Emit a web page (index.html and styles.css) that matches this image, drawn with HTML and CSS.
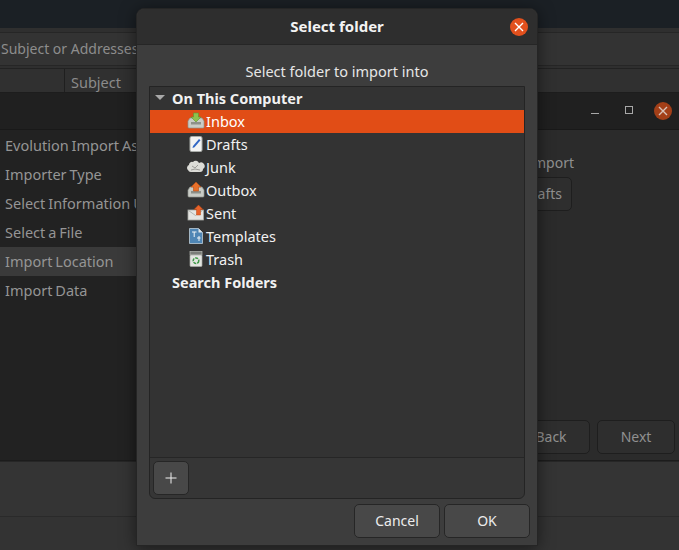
FILE: index.html
```html
<!DOCTYPE html>
<html lang="en">
<head>
<meta charset="utf-8">
<title>Select folder</title>
<link rel="stylesheet" href="styles.css">
</head>
<body>
<div class="desktop">
  <div class="main-window">
    <div class="search-row"><span class="search-entry">Subject or Addresses contain</span></div>
    <div class="columns"><span class="col col-flags"></span><span class="col col-subject">Subject</span></div>
    <div class="main-rest"></div>
    <div class="main-status"></div>
    <div class="main-foot"></div>
  </div>

  <div class="import-window">
    <div class="import-head">
      <span class="wm wm-min"></span>
      <span class="wm wm-max"></span>
      <span class="wm-close dim"><svg width="14" height="14" viewBox="0 0 14 14"><path d="M3 3l8 8M11 3l-8 8" stroke="#d9c4bb" stroke-width="1.4" fill="none"/></svg></span>
    </div>
    <div class="import-body">
      <div class="assistant-side">
        <div class="step">Evolution Import Assistant</div>
        <div class="step">Importer Type</div>
        <div class="step">Select Information Using</div>
        <div class="step">Select a File</div>
        <div class="step step-on">Import Location</div>
        <div class="step">Import Data</div>
      </div>
      <div class="assistant-page">
        <div class="import-label">Location to import</div>
        <div class="fake-btn">Drafts</div>
        <div class="assistant-actions">
          <span class="fake-btn action">Back</span>
          <span class="fake-btn action">Next</span>
        </div>
      </div>
    </div>
  </div>

  <div class="dialog">
    <div class="dialog-head">
      <span class="dialog-title">Select folder</span>
      <span class="wm-close"><svg width="14" height="14" viewBox="0 0 14 14"><path d="M3 3l8 8M11 3l-8 8" stroke="#fff" stroke-width="1.4" fill="none"/></svg></span>
    </div>
    <div class="dialog-body">
      <div class="prompt">Select folder to import into</div>
      <div class="frame">
        <div class="tree">
          <div class="row group"><span class="arrow"></span><span>On This Computer</span></div>
          <div class="row item selected">
            <svg class="ico" viewBox="0 0 18 18"><path d="M1 9l2-3h12l2 3v6a1 1 0 0 1-1 1H2a1 1 0 0 1-1-1z" fill="#c9ccc6" stroke="#8f938c" stroke-width=".7"/><path d="M4 10h10v2.500H4z" fill="#8d918a"/><path d="M6.500 1h5v4h2.500L9 10 4 5h2.500z" fill="#8ec24d" stroke="#5f9430" stroke-width=".6"/></svg>
            <span>Inbox</span>
          </div>
          <div class="row item">
            <svg class="ico" viewBox="0 0 18 18"><rect x="3" y="1.500" width="12" height="15" rx="1.500" fill="#f2f3f2" stroke="#a9aca8"/><path d="M6 11l6-7 1.500 1.300-6 7L5.500 13z" fill="#2f66c4"/></svg>
            <span>Drafts</span>
          </div>
          <div class="row item">
            <svg class="ico" viewBox="0 0 18 18"><path d="M1 12a3 3 0 0 1 1-5 3 3 0 0 1 4-3 3.500 3.500 0 0 1 6 1 3 3 0 0 1 4 6 3 3 0 0 1-3 3H4a3 3 0 0 1-3-2z" fill="#dcdcd7"/><path d="M5 8l3 2 3-3M4 12l4-1 5 1" stroke="#8c8c88" stroke-width=".8" fill="none"/></svg>
            <span>Junk</span>
          </div>
          <div class="row item">
            <svg class="ico" viewBox="0 0 18 18"><path d="M1 9l2-3h12l2 3v6a1 1 0 0 1-1 1H2a1 1 0 0 1-1-1z" fill="#c9ccc6" stroke="#8f938c" stroke-width=".7"/><path d="M4 10h10v2.500H4z" fill="#8d918a"/><path d="M9 1l5 5h-2.500v4h-5V6H4z" fill="#e8702a" stroke="#b84f14" stroke-width=".6"/></svg>
            <span>Outbox</span>
          </div>
          <div class="row item">
            <svg class="ico" viewBox="0 0 18 18"><rect x="1" y="6" width="15.500" height="10" fill="#e4e5e2" stroke="#a5a8a3" stroke-width=".8"/><path d="M1.500 6.500l7 5 7-5" stroke="#a5a8a3" fill="none" stroke-width=".8"/><path d="M11.500 1L16 5.500h-2.500V11h-4V5.500H7z" fill="#e8622a" stroke="#bf4a14" stroke-width=".5"/></svg>
            <span>Sent</span>
          </div>
          <div class="row item">
            <svg class="ico" viewBox="0 0 18 18"><path d="M2.500 1.500h9l4 4v11h-13z" fill="#4f86b5" stroke="#cfdce6" stroke-width=".7"/><path d="M11.500 1.500l4 4h-4z" fill="#dfe6ea"/><path d="M5 5h4.500M7.200 5v5M10 11h3.500M12 9v5" stroke="#eef3f6" stroke-width="1" fill="none"/></svg>
            <span>Templates</span>
          </div>
          <div class="row item">
            <svg class="ico" viewBox="0 0 18 18"><rect x="3" y="1.500" width="12" height="3.500" fill="#7b7e79" stroke="#b5b8b3" stroke-width=".7"/><rect x="3" y="5" width="12" height="11.500" rx="1" fill="#e3e5e1" stroke="#a7aaa5" stroke-width=".7"/><circle cx="9" cy="10.700" r="2.800" fill="none" stroke="#3f9a47" stroke-width="1.500" stroke-dasharray="3 1"/></svg>
            <span>Trash</span>
          </div>
          <div class="row group"><span class="arrow-space"></span><span>Search Folders</span></div>
        </div>
        <div class="frame-toolbar">
          <span class="btn add-btn"><svg width="12" height="12" viewBox="0 0 12 12"><path d="M6 .5v11M.5 6h11" stroke="#f0f0f0" stroke-width="1" fill="none"/></svg></span>
        </div>
      </div>
      <div class="dialog-actions">
        <span class="btn action-btn">Cancel</span>
        <span class="btn action-btn">OK</span>
      </div>
    </div>
  </div>
</div>
</body>
</html>
```
FILE: styles.css
```css
* { box-sizing: border-box; }
html, body { margin: 0; padding: 0; }
body { background: #1b2025; font-family: "Noto Sans", sans-serif; font-size: 14px; }
.desktop { position: relative; width: 679px; height: 550px; overflow: hidden; background: #1b2025; }

.main-window { position: absolute; left: 0; top: 28px; width: 679px; height: 522px; background: #333; display: flex; flex-direction: column; }
.search-row { height: 41px; padding: 4px 0 3px; background: #2f2f2f; border-bottom: 1px solid #222; flex: none; }
.search-entry { display: block; height: 34px; line-height: 32px; background: #333; border-top: 1px solid #262626; border-bottom: 1px solid #262626; color: #8d8d8d; padding-left: 1px; white-space: nowrap; overflow: hidden; }
.columns { height: 24px; display: flex; background: #303030; border-bottom: 1px solid #1d1d1d; flex: none; }
.col { height: 100%; line-height: 26px; color: #8b8b8b; font-size: 14.5px; white-space: nowrap; }
.col-flags { width: 65px; border-right: 1px solid #1f1f1f; }
.col-subject { padding-left: 6px; }
.main-rest { height: 368px; flex: none; }
.main-status { height: 56px; flex: none; background: #343434; border-top: 1px solid #262626; border-bottom: 1px solid #2a2a2a; }
.main-foot { flex: 1; background: #333; }

.import-window { position: absolute; left: 0; top: 93px; width: 679px; height: 368px; background: #2b2b2b; display: flex; flex-direction: column; border-bottom: 1px solid #1c1c1c; }
.import-head { height: 37px; flex: none; background: #202020; border-bottom: 1px solid #191919; display: flex; align-items: center; justify-content: flex-end; padding-right: 7px; }
.wm { display: block; flex: none; }
.wm-min { width: 8px; height: 1px; background: #a8a8a8; margin: 4px 26px 0 0; }
.wm-max { width: 8px; height: 8px; border: 1px solid #a8a8a8; margin: -3px 21px 0 0; }
.wm-close { width: 18px; height: 18px; border-radius: 50%; background: #e2501d; display: flex; align-items: center; justify-content: center; flex: none; }
.wm-close.dim { background: #a33f18; }
.import-body { flex: 1; display: flex; min-height: 0; }
.assistant-side { width: 137px; flex: none; background: #222; padding-top: 1px; }
.step { height: 29px; line-height: 29px; padding-left: 5px; color: #959595; font-size: 14.5px; word-spacing: -0.8px; white-space: nowrap; }
.step-on { background: #3a3a3a; }
.assistant-page { flex: 1; position: relative; color: #909090; }
.import-label { position: absolute; right: 105px; top: 23px; white-space: nowrap; }
.fake-btn { position: absolute; left: 360px; top: 47px; width: 75px; height: 34px; border: 1px solid #1e1e1e; border-radius: 5px; line-height: 32px; text-align: right; padding-right: 9px; background: #2e2e2e; }
.assistant-actions { position: absolute; right: 4px; bottom: 6px; display: flex; gap: 7px; }
.fake-btn.action { position: static; width: 78px; text-align: center; padding: 0; }

.dialog { position: absolute; left: 136px; top: 8px; width: 402px; height: 538px; background: #3d3d3d; border: 1px solid #252525; border-radius: 8px 8px 0 0; display: flex; flex-direction: column; box-shadow: 0 2px 16px rgba(0,0,0,.5); }
.dialog-head { position: relative; height: 36px; flex: none; background: #2e2e2e; border-bottom: 1px solid #262626; border-radius: 7px 7px 0 0; display: flex; align-items: center; justify-content: center; padding-bottom: 2px; }
.dialog-head .wm-close { position: absolute; right: 9px; top: 9px; }
.dialog-title { color: #f3f3f3; font-weight: 700; font-size: 15px; }
.dialog-body { flex: 1; min-height: 0; padding: 17px 12px 8px; display: flex; flex-direction: column; }
.prompt { height: 24px; line-height: 18px; text-align: center; color: #e6e6e6; font-size: 14.5px; flex: none; }
.frame { height: 413px; flex: none; background: #363636; border: 1px solid #242424; border-radius: 0 0 6px 6px; display: flex; flex-direction: column; }
.tree { height: 371px; flex: none; background: #333; border-bottom: 1px solid #262626; }
.row { height: 23px; padding-bottom: 2px; display: flex; align-items: center; color: #f1f1f1; font-size: 14.5px; white-space: nowrap; }
.group { font-weight: 700; }
.arrow { width: 0; height: 0; border-left: 5px solid transparent; border-right: 5px solid transparent; border-top: 5px solid #a9a9a9; margin: 0 7px 0 5px; }
.arrow-space { width: 22px; }
.item { padding-left: 37px; gap: 1px; }
.selected { background: #e14d16; color: #fff; }
.ico { width: 18px; height: 18px; flex: none; }
.frame-toolbar { flex: 1; padding: 3px; display: flex; align-items: flex-start; }
.btn { display: flex; align-items: center; justify-content: center; background: #484848; border: 1px solid #262626; border-radius: 5px; color: #ececec; }
.add-btn { width: 36px; height: 34px; }
.dialog-actions { flex: 1; display: flex; justify-content: flex-end; gap: 4px; padding-top: 5px; margin-right: -5px; }
.action-btn { width: 86px; height: 34px; padding-bottom: 1px; }
```
